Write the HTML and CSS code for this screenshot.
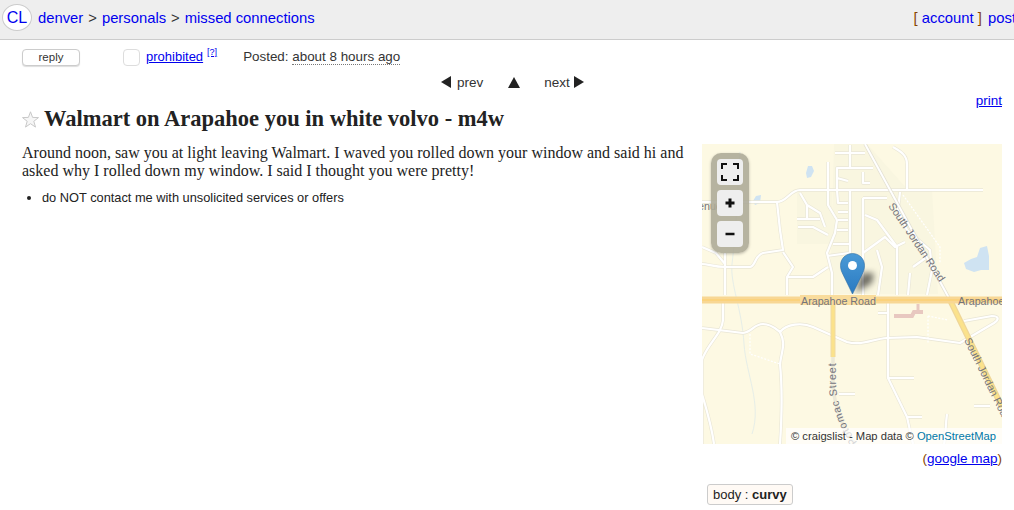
FILE: index.html
```html
<!DOCTYPE html>
<html lang="en">
<head>
<meta charset="utf-8">
<title>Walmart on Arapahoe you in white volvo - m4w</title>
<link rel="stylesheet" href="styles.css">
</head>
<body>
<header class="topbar">
  <nav class="crumbs">
    <a class="logo" href="#">CL</a>
    <a href="#">denver</a><span class="sep">&gt;</span><a href="#">personals</a><span class="sep">&gt;</span><a href="#">missed connections</a>
  </nav>
  <div class="userlinks"><span>[</span> <a href="#">account</a> <span>]</span> <a href="#" class="post">post</a></div>
</header>
<div class="actions">
  <button class="reply">reply</button>
  <span class="flagbox"></span>
  <a class="flag" href="#">prohibited</a>
  <sup class="help"><a href="#">[?]</a></sup>
  <span class="posted">Posted: <span class="ago">about 8 hours ago</span></span>
</div>
<div class="pager">
  <span class="tri tri-left"></span><span class="pg-label pg-prev">prev</span>
  <span class="tri tri-up"></span>
  <span class="pg-label">next</span><span class="tri tri-right"></span>
</div>
<div class="print"><a href="#">print</a></div>
<h1 class="title">
  <svg class="star" width="17" height="17" viewBox="0 0 17 17"><path d="M8.500 0.800L10.600 6.400 16.500 6.600 11.800 10.300 13.500 16.100 8.500 12.700 3.500 16.100 5.200 10.300 0.500 6.600 6.400 6.400Z" fill="#f6f6f6" stroke="#c8c8c8"/></svg>
  Walmart on Arapahoe you in white volvo - m4w
</h1>
<main class="content">
  <section class="body">
    <p class="text">Around noon, saw you at light leaving Walmart. I waved you rolled down your window and said hi and asked why I rolled down my window. I said I thought you were pretty!</p>
    <ul class="notices"><li>do NOT contact me with unsolicited services or offers</li></ul>
  </section>
  <aside class="side">
    <div class="map">
      <svg class="tiles" width="300" height="300" viewBox="0 0 300 300">
        <defs>
          <g id="roads">
            <path d="M0 58H75C85 58 88 46 98 46H281"/>
            <path d="M133 9H163M148 1V23M126 18V46M135 46V24H171M161 28V39H168M135 34L146 37M191 3C200 8 205 12 205 20V46"/>
            <path d="M148 46V109M135 46L136 59H146M136 68H146M136 76H146M135 86H146M131 100H147"/>
            <path d="M126 46V61L135 76 133 89 125 109 130 129V151M125 112L147 109"/>
            <path d="M98 49L105 61 118 69 123 83M105 61V74M95 75H118M96 83H111L126 91"/>
            <path d="M75 58L78 86 81 106 61 109C52 112 54 122 48 123H23C12 123 6 120 0 120M81 108L91 123 85 133V151M85 133H111L126 123"/>
            <path d="M23 109V151M0 103L14 109 23 120"/>
            <path d="M161 54H185M161 54V151M163 71L175 76 195 103V151M161 109L183 93 193 103 203 98M175 106L180 123 176 151"/>
            <path d="M198 48L196 66 205 86 228 106 230 126 225 151M208 129L206 151M211 123L225 113"/>
            <path d="M0 184L41 189C50 188 52 180 61 180 70 180 75 186 78 188 84 180 100 178 111 183L145 198C160 202 170 195 185 194L215 193 258 199 292 179C298 175 296 172 290 172L262 177"/>
            <path d="M186 159V234L205 273 211 300M176 169H186M186 234H212M205 273H220M272 262H288M245 270C243 285 244 292 242 300"/>
            <path d="M78 188C84 200 80 205 78 220 80 240 80 270 78 300M21 159V176C20 190 5 200 0 216V300M0 250C6 270 10 285 12 300M137 250H153"/>
          </g>
          <path id="potomac" d="M153 300C140 285 132 260 131 240V190"/>
        </defs>
        <rect width="300" height="300" fill="#fdf9e3"/>
        <path d="M132 0H165L205 45H230L236 150H128Z" fill="#f9f6e0"/>
        <path d="M95 48H130V100H95Z" fill="#f9f6e0"/>
        <path d="M38 8C36 30 36 70 30 120 28 140 40 165 42 200 44 230 60 260 50 290" fill="none" stroke="#e6eee8"/>
        <g fill="#cfe3f2">
          <path d="M106 22l4 0 2 5-3 6-4 1-1-5z"/>
          <path d="M54 52l5-1-1 8-5 2-2-4z"/>
          <path d="M278 104l7-2 2 10 0 14-8 0-7 2-8-3-2-6 7-4 6-2z"/>
        </g>
        <use href="#roads" class="road-edge"/>
        <use href="#roads" class="road-fill"/>
        <path class="dotted" d="M48 190V210L78 220M226 172V200M226 172L246 176M201 51L238 103V119"/>
        <path d="M192 172H210L212 168H221" fill="none" stroke="#e8c8c0" stroke-width="4"/>
        <path d="M216 160V168" fill="none" stroke="#e8c8c0" stroke-width="3"/>
        <path d="M163 0L248 156" fill="none" stroke="#e3e0d2" stroke-width="3.500"/>
        <path d="M163 0L248 156" fill="none" stroke="#fff" stroke-width="2"/>
        <path d="M131 156V213" fill="none" stroke="#efd9a2" stroke-width="5"/>
        <path d="M131 156V213" fill="none" stroke="#fbe28b" stroke-width="3"/>
        <path d="M131 213V240C132 260 140 285 153 300" fill="none" stroke="#ece9d8" stroke-width="3.500"/>
        <path d="M248 156L300 263" fill="none" stroke="#eed598" stroke-width="6"/>
        <path d="M248 156L300 263" fill="none" stroke="#fbe28b" stroke-width="3.500"/>
        <path d="M0 156H300" stroke="#f8d794" stroke-width="7" fill="none"/>
        <path d="M0 156H300" stroke="#fbd27c" stroke-width="2" fill="none"/>
        <g class="label">
          <rect x="98" y="151" width="76" height="10" fill="#f9dc9c"/>
          <text x="99" y="161">Arapahoe Road</text>
          <text x="256" y="161">Arapahoe Road</text>
          <text x="-4" y="66">enue</text>
          <text transform="translate(186 62) rotate(56)">South Jordan Road</text>
          <text transform="translate(262 196) rotate(64)">South Jordan Road</text>
          <text class="label-spaced" dy="3"><textPath href="#potomac">Potomac Street</textPath></text>
        </g>
      </svg>
      <div class="controls">
        <button class="ctl">
          <svg width="18" height="18" viewBox="0 0 18 18"><path d="M1 6V1H6M12 1H17V6M17 12V17H12M6 17H1V12" fill="none" stroke="#111" stroke-width="2"/></svg>
        </button>
        <button class="ctl">
          <svg width="10" height="10" viewBox="0 0 10 10"><path d="M5 0.500V9.500M0.500 5H9.500" fill="none" stroke="#111" stroke-width="3"/></svg>
        </button>
        <button class="ctl">
          <svg width="10" height="10" viewBox="0 0 10 10"><path d="M0.500 5H9.500" fill="none" stroke="#111" stroke-width="2.500"/></svg>
        </button>
      </div>
      <svg class="pin" width="48" height="41" viewBox="0 0 48 41">
        <defs>
          <linearGradient id="pinfill" x1="0" y1="0" x2="0" y2="1">
            <stop offset="0" stop-color="#4a9ad6"/>
            <stop offset="1" stop-color="#2a7ac2"/>
          </linearGradient>
          <filter id="blur" x="-50%" y="-50%" width="200%" height="200%"><feGaussianBlur stdDeviation="3"/></filter>
        </defs>
        <path d="M15 40L22 20 34 20 32 30Z" fill="#000" opacity=".55" filter="url(#blur)"/>
        <path d="M12.500 0.500C5.800 0.500 0.500 5.800 0.500 12.500 0.500 16 1.500 18.500 3 21.500L12.500 41 22 21.500C23.500 18.500 24.500 16 24.500 12.500 24.500 5.800 19.200 0.500 12.500 0.500Z" fill="url(#pinfill)" stroke="#2e6da4" stroke-width=".6"/>
        <circle cx="12.500" cy="12.500" r="4.500" fill="#fff"/>
      </svg>
      <div class="attribution">© craigslist - Map data © <a href="#">OpenStreetMap</a></div>
    </div>
    <div class="gmap">(<a href="#">google map</a>)</div>
    <div class="attrs"><span class="attr">body : <b>curvy</b></span></div>
  </aside>
</main>
</body>
</html>
```
FILE: styles.css
```css
* { box-sizing: border-box; }
html, body { margin: 0; height: 510px; overflow: hidden; }
body {
  background: #fff;
  color: #222;
  font-family: "Liberation Sans", Arial, sans-serif;
  font-size: 14px;
}
a { color: #00e; }

.topbar {
  height: 40px;
  background: #eee;
  border-bottom: 1px solid #ccc;
  display: flex;
  justify-content: space-between;
  align-items: center;
  padding: 0 0 4px 2px;
  font-size: 14.800px;
  color: #333;
}
.topbar a { text-decoration: none; }
.crumbs { display: flex; align-items: center; }
.logo {
  width: 30px;
  height: 27px;
  margin-right: 6px;
  background: #fff;
  border: 1px solid #ccc;
  border-radius: 50%;
  display: flex;
  align-items: center;
  justify-content: center;
  font-size: 16px;
}
.sep { margin: 0 5px; }
.userlinks { flex-shrink: 0; margin-right: -2px; white-space: nowrap; }
.userlinks span { color: #840; }
.post { margin-left: 2px; }

.actions {
  height: 25px;
  padding: 9px 0 0 22px;
  display: flex;
  align-items: flex-start;
}
.reply {
  width: 58px;
  height: 17px;
  padding: 0 0 2px;
  background: #fff;
  border: 1px solid #ccc;
  border-radius: 4px;
  box-shadow: 0 1px 1px #ddd;
  font: 11.500px "Liberation Sans", Arial, sans-serif;
  color: #333;
}
.flagbox {
  width: 17px;
  height: 17px;
  margin-left: 43px;
  border: 1px solid #ddd;
  border-radius: 4px;
}
.flag { margin-left: 6px; font-size: 13px; line-height: 16px; }
.help { margin: -2px 0 0 4px; font-size: 9px; line-height: 10px; vertical-align: baseline; }
.posted { margin-left: 26px; font-size: 13.400px; line-height: 16px; color: #333; }
.ago { border-bottom: 1px dotted #777; }

.pager {
  height: 29px;
  padding: 5px 0 0 441px;
  display: flex;
  align-items: center;
  font-size: 13.500px;
  color: #333;
}
.pg-label { margin: 0 4px 0 0; }
.pg-prev { margin: 0 0 0 6px; }
.tri { width: 0; height: 0; border-style: solid; border-color: transparent; }
.tri-left { border-width: 6px 10px 6px 0; border-right-color: #222; }
.tri-right { border-width: 6px 0 6px 10px; border-left-color: #222; }
.tri-up { border-width: 0 6px 11px; border-bottom-color: #222; margin: 0 24px 0 25px; }

.print { height: 12px; padding-right: 12px; text-align: right; font-size: 13.500px; line-height: 13px; }

.title {
  margin: 0;
  padding: 0 0 0 22px;
  height: 25px;
  display: flex;
  align-items: center;
  gap: 5px;
  font: bold 22.500px "Liberation Serif", "Times New Roman", serif;
}
.star { flex-shrink: 0; margin-top: 1px; }

.content { display: flex; padding: 13px 12px 0 22px; gap: 16px; }
.body { flex: 1; min-width: 0; }
.text {
  margin: 0;
  font: 16px/18px "Liberation Serif", "Times New Roman", serif;
  color: #222;
}
.notices { margin: 10px 0 0; padding-left: 20px; font-size: 12.800px; line-height: 16px; }

.side { width: 300px; flex-shrink: 0; }
.map { position: relative; width: 300px; height: 300px; overflow: hidden; }
.tiles { display: block; }
.road-edge { fill: none; stroke: #e9e6d6; stroke-width: 3.400; stroke-linejoin: round; }
.road-fill { fill: none; stroke: #fff; stroke-width: 2.200; stroke-linejoin: round; }
.dotted { fill: none; stroke: #fff; stroke-width: 1.200; stroke-dasharray: 2 1.500; }
.label { font: 10.700px "Liberation Sans", Arial, sans-serif; fill: #74747c; }
.label-spaced { letter-spacing: .9px; }
.controls {
  position: absolute;
  left: 9px;
  top: 9px;
  width: 38px;
  padding: 6px;
  display: flex;
  flex-direction: column;
  gap: 5px;
  background: rgba(172, 168, 150, .88);
  border-radius: 10px;
  box-shadow: 0 1px 3px rgba(0, 0, 0, .25);
}
.ctl {
  width: 26px;
  height: 26px;
  padding: 0;
  background: #eee;
  border: 0;
  border-radius: 4px;
  display: flex;
  align-items: center;
  justify-content: center;
}
.pin { position: absolute; left: 138px; top: 109px; }
.attribution {
  position: absolute;
  right: 0;
  bottom: 0;
  width: 216px;
  height: 16px;
  padding-left: 5px;
  background: rgba(255, 255, 255, .7);
  font-size: 11.200px;
  line-height: 17px;
  color: #333;
  white-space: nowrap;
}
.attribution a { color: #0078a8; text-decoration: none; }
.gmap { margin-top: 7px; text-align: right; font-size: 13.500px; line-height: 15px; color: #840; }
.attrs { margin-top: 18px; padding-left: 5px; }
.attr {
  display: inline-block;
  height: 21px;
  padding: 0 5px;
  background: #fffaf5;
  border: 1px solid #ccc;
  border-radius: 3px;
  font-size: 13px;
  line-height: 20px;
}
```
